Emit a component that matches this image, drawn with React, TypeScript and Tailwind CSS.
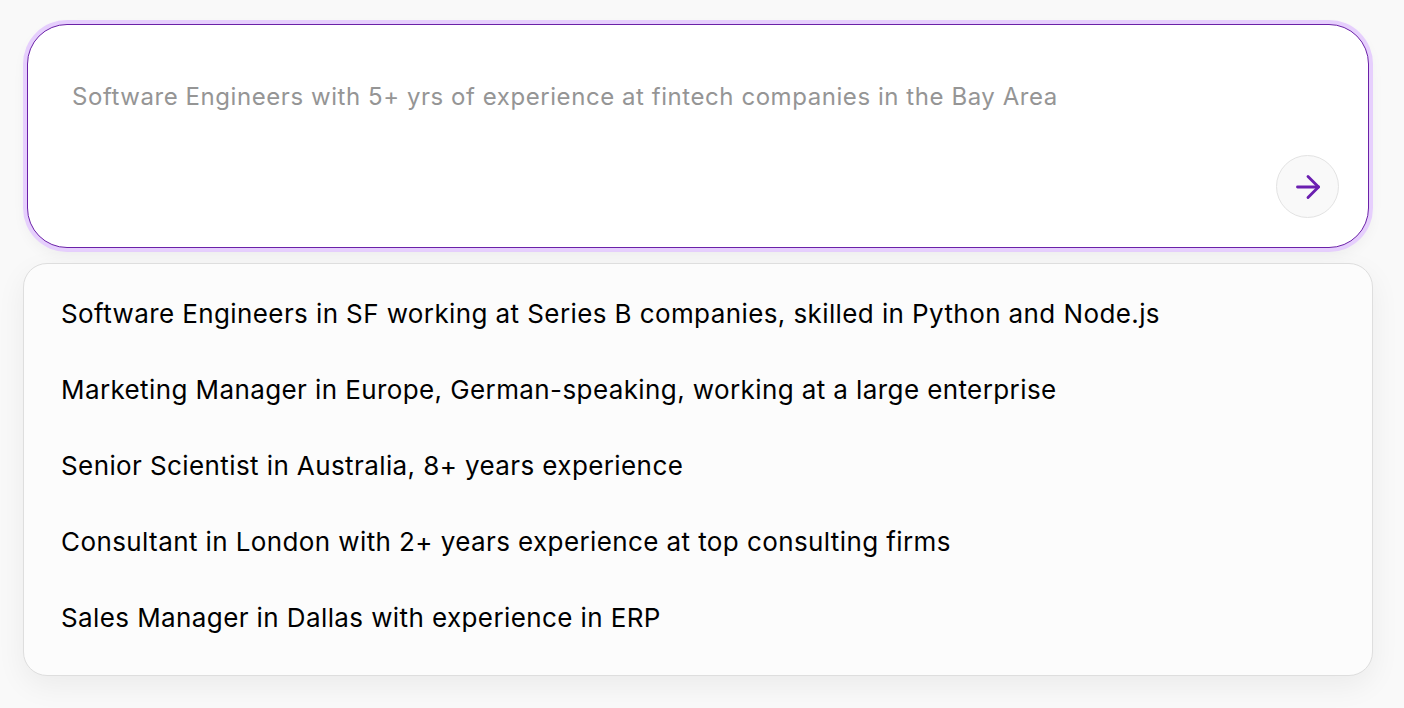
import { ArrowRight } from 'lucide-react'

const suggestions = [
  'Software Engineers in SF working at Series B companies, skilled in Python and Node.js',
  'Marketing Manager in Europe, German-speaking, working at a large enterprise',
  'Senior Scientist in Australia, 8+ years experience',
  'Consultant in London with 2+ years experience at top consulting firms',
  'Sales Manager in Dallas with experience in ERP',
]

export default function App() {
  return (
    <div
      className="min-h-[708px] bg-[#f9f9f9] pt-[24px] pl-[23px]"
      style={{ fontFamily: 'Inter, "Noto Sans", sans-serif' }}
    >
      <div className="w-[1350px] flex flex-col gap-[15px]">
        <div className="mx-[4px] h-[224px] rounded-[40px] border border-[#6b21a8] bg-white ring-4 ring-[#e6cffd] shadow-[0_6px_16px_rgba(0,0,0,0.06)] flex flex-col pl-[44px] pr-[29px] pt-[56px] pb-[29px]">
          <textarea
            className="flex-1 resize-none bg-transparent outline-none text-[24px] leading-[32px] tracking-[0.56px] text-[#222] placeholder:text-[#959595]"
            placeholder="Software Engineers with 5+ yrs of experience at fintech companies in the Bay Area"
          />
          <div className="flex justify-end">
            <button className="w-[63px] h-[63px] rounded-full bg-[#f9f9f9] border border-[#e3e3e3] flex items-center justify-center">
              <ArrowRight className="w-[36px] h-[36px] text-[#6b1fb0]" strokeWidth={1.9} />
            </button>
          </div>
        </div>
        <div className="rounded-[24px] border border-[#dedede] bg-[#fcfcfc] shadow-[0_10px_30px_rgba(0,0,0,0.06)] pt-[11px] pb-[20px]">
          {suggestions.map((s) => (
            <div key={s} className="h-[76px] flex items-center px-[37px] text-[26px] tracking-[0.4px] text-black">
              {s}
            </div>
          ))}
        </div>
      </div>
    </div>
  )
}
